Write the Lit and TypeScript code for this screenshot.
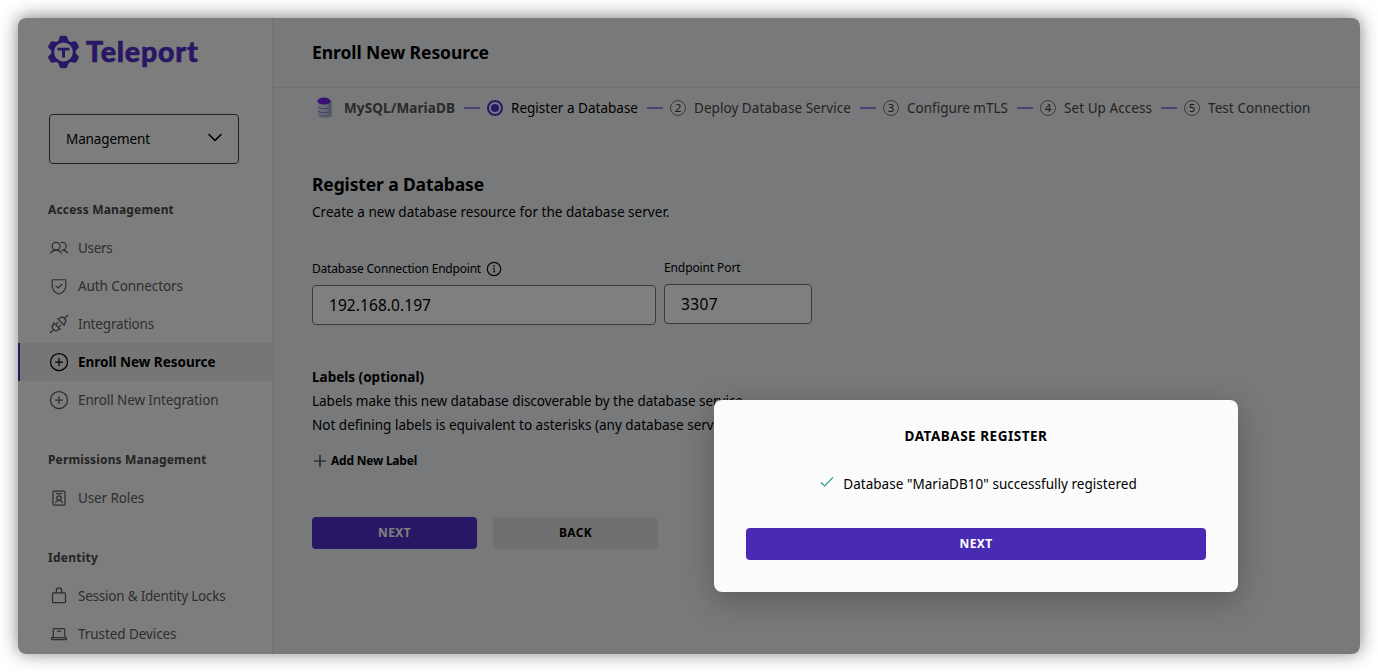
import { LitElement, html, svg, css } from "lit";
import { customElement, property } from "lit/decorators.js";

/** A single line of text tracked so that it fills a given width. */
@customElement("fit-text")
class FitText extends LitElement {
  @property({ type: Number }) w = 0;
  @property() text = "";
  static styles = css`
    :host { display: inline-block; white-space: pre; flex: none; }
  `;
  render() {
    return html`<span>${this.text}</span>`;
  }
  updated() {
    const span = this.renderRoot.querySelector("span") as HTMLElement;
    span.style.letterSpacing = "0";
    const natural = span.getBoundingClientRect().width;
    span.style.letterSpacing = `${(this.w - natural) / this.text.length}px`;
    this.style.width = `${this.w}px`;
  }
}

const t = (text: string, w: number) => html`<fit-text .text=${text} .w=${w}></fit-text>`;

const icons: Record<string, unknown> = {
  users: svg`<g transform="translate(.5 .2) scale(.075)" stroke-width="17"><circle cx="88" cy="108" r="52"/><path d="M155.4 57.9A54.5 54.5 0 0 1 169.5 56a52 52 0 0 1 0 104M16 197.4a88 88 0 0 1 144 0M169.5 160a87.9 87.9 0 0 1 72 37.4"/></g>`,
  shield: svg`<g transform="scale(.078125)" stroke-width="15"><path d="M40 114.7V56a8 8 0 0 1 8-8h160a8 8 0 0 1 8 8v58.7c0 84-71.3 111.8-85.5 116.5a7.2 7.2 0 0 1-5 0C111.3 226.5 40 198.7 40 114.7Z"/><path d="M166 106l-50 48-26-24"/></g>`,
  plugs: svg`<path d="M1.4 18.8l3.2-3.2M4.6 8.6l6.8 6.8M5.5 9.5L4.2 10.8a3.2 3.2 0 0 0 0 4.5l.5.5a3.2 3.2 0 0 0 4.5 0l1.3-1.3M6.8 10.6l2.2-2.2M9.5 13.3l2.2-2.2M8.6 4.6l6.8 6.8M9.5 5.5l1.3-1.3a3.2 3.2 0 0 1 4.5 0l.5.5a3.2 3.2 0 0 1 0 4.5l-1.3 1.3M15.5 4.5l3.2-3.2"/>`,
  plus: svg`<circle cx="10" cy="10" r="8.5"/><path d="M10 6.5v7M6.5 10h7"/>`,
  badge: svg`<rect x="4" y="3" width="12" height="14" rx="1"/><path d="M7.5 5.5h5M6.6 14.6c.6-1.5 1.9-2.3 3.4-2.3s2.8.8 3.4 2.3"/><circle cx="10" cy="10" r="2.2"/>`,
  lock: svg`<rect x="3.5" y="6.8" width="13" height="9.8" rx=".9"/><path d="M7.4 6.6V4.5a2.6 2.6 0 0 1 5.2 0V6.6"/>`,
  laptop: svg`<path d="M4.2 13.3V5.6a1 1 0 0 1 1-1h9.6a1 1 0 0 1 1 1v7.7M2.5 13.5h15v1.2a1 1 0 0 1-1 1h-13a1 1 0 0 1-1-1zM8.5 7h3"/>`,
};

const icon = (name: string) =>
  html`<svg class="icon" viewBox="0 0 20 20" width="20" height="20">${icons[name]}</svg>`;

type Item = { icon: string; label: string; w: number; active?: boolean };
const sections: { title: string; w: number; items: Item[] }[] = [
  {
    title: "Access Management", w: 126,
    items: [
      { icon: "users", label: "Users", w: 34.5 },
      { icon: "shield", label: "Auth Connectors", w: 105 },
      { icon: "plugs", label: "Integrations", w: 76 },
      { icon: "plus", label: "Enroll New Resource", w: 137.5, active: true },
      { icon: "plus", label: "Enroll New Integration", w: 140.5 },
    ],
  },
  { title: "Permissions Management", w: 158.5, items: [{ icon: "badge", label: "User Roles", w: 66 }] },
  {
    title: "Identity", w: 50,
    items: [
      { icon: "lock", label: "Session & Identity Locks", w: 147.5 },
      { icon: "laptop", label: "Trusted Devices", w: 98.5 },
    ],
  },
];

const steps = [
  { label: "Register a Database", w: 127 },
  { label: "Deploy Database Service", w: 157 },
  { label: "Configure mTLS", w: 101 },
  { label: "Set Up Access", w: 88 },
  { label: "Test Connection", w: 102.5 },
];

@customElement("app-root")
class AppRoot extends LitElement {
  static styles = css`
    * { box-sizing: border-box; }
    :host {
      display: block; width: 1378px; height: 672px; padding: 18px; overflow: hidden;
      background: #fff; font-family: "Noto Sans", sans-serif; color: #000; font-size: 13.5px;
      box-sizing: border-box; position: relative;
    }
    .window {
      position: relative; display: flex; width: 1342px; height: 636px; border-radius: 8px;
      box-shadow: 0 -1px 18px rgba(0, 0, 0, 0.5);
    }
    .page { display: flex; flex: 1; border-radius: 8px; overflow: hidden; background: #f1f2f4; }
    .scrim { position: absolute; inset: 0; border-radius: 8px; background: rgba(0, 0, 0, 0.5); }
    svg { display: block; flex: none; }
    .icon { fill: none; stroke: currentColor; stroke-width: 1.25; stroke-linecap: round; stroke-linejoin: round; }

    .side { width: 255px; background: #fbfbfc; border-right: 1px solid #e6e7ea; flex: none; }
    .logo { display: flex; align-items: center; gap: 6px; height: 68px; padding-left: 29px; color: #512fc9;
      font: 900 28.5px/66px Lato, sans-serif; }
    .word { height: 68px; -webkit-text-stroke: 0.6px #512fc9; }
    .picker { margin: 28px 0 0 31px; width: 190px; height: 50px; border: 1px solid #444; border-radius: 4px;
      padding: 0 15px 0 16px; display: flex; align-items: center; justify-content: space-between; color: #000; }
    .nav { padding-top: 26px; }
    .title { height: 39px; line-height: 39px; padding-left: 30px; font-weight: 700; font-size: 12px; color: #484848; }
    .item { height: 38px; display: flex; align-items: center; gap: 9px; padding-left: 31px; color: #5c5c5c; }
    .item.active { background: #ececed; color: #000; font-weight: 700; border-left: 2px solid #512fc9; padding-left: 29px; }
    .sect { margin-bottom: 21px; }

    .main { flex: 1; }
    .head { height: 70px; border-bottom: 1px solid #e2e3e6; padding: 0 0 2px 39px; display: flex; align-items: center;
      font-size: 17.5px; font-weight: 700; }
    .steps { height: 40px; display: flex; align-items: center; padding-left: 43px; }
    .db { font-weight: 700; color: #555; margin-left: 11px; display: flex; }
    .bar { width: 16px; height: 2px; background: #9b82e3; margin: 0 7px 0 9px; flex: none; }
    .num { width: 16px; height: 16px; border: 1px solid #777; border-radius: 50%; display: grid; place-items: center;
      font-size: 11.5px; line-height: 1; color: #333; flex: none; margin-right: 8px; }
    .num.on { border: 2px solid #512fc9; }
    .num.on i { width: 8px; height: 8px; border-radius: 50%; background: #512fc9; }
    .step { color: #484848; display: flex; align-items: center; }
    .step.on { color: #000; }
    .body { padding: 43px 0 0 39px; }
    .h2 { font-size: 17.5px; font-weight: 700; height: 26px; line-height: 26px; display: flex; margin-bottom: 3px; }
    .p { height: 24px; line-height: 24px; display: flex; }
    .fields { display: flex; gap: 8px; margin-top: 36px; }
    .label { height: 24px; padding-bottom: 9px; font-size: 12px; display: flex; align-items: center; gap: 5px; }
    .label svg { margin-top: 1px; }
    .input { height: 40px; border: 1px solid #777; border-radius: 4px; background: #fff; font-size: 15.5px;
      padding-left: 16px; display: flex; align-items: center; }
    .ep { width: 344px; padding-top: 1px; }
    .pt { width: 148px; }
    .labels { margin-top: 40px; }
    .add { display: flex; align-items: center; gap: 4px; height: 24px; margin-top: 12px; padding-left: 1px; font-weight: 700; font-size: 12px; }
    .add fit-text { margin-bottom: 1px; }
    .row { display: flex; gap: 16px; margin-top: 44px; }
    .btn { width: 165px; height: 32px; border-radius: 4px; display: flex; align-items: center; justify-content: center;
      font-size: 12px; font-weight: 700; background: #e0e0e1; padding-bottom: 1px; }
    .btn.primary { background: #512fc9; color: #fff; }

    .modal { position: absolute; left: 696px; top: 382px; width: 524px; height: 192px; border-radius: 8px;
      background: #fbfbfc; padding: 24px 32px 32px; display: flex; flex-direction: column; align-items: center;
      box-shadow: 0 8px 32px rgba(0, 0, 0, 0.26); }
    .mt { font-weight: 700; height: 24px; line-height: 24px; }
    .msg { height: 24px; line-height: 24px; display: flex; gap: 9px; margin-top: 24px; padding-left: 5px; }
    .msg svg { margin-top: 3px; }
    .modal .btn { width: 460px; margin-top: 32px; background: #482bb2; color: #fff; }
  `;

  renderSide() {
    return html`<div class="side">
      <div class="logo">
        <svg width="33" height="34" viewBox="-16.5 -17 33 34" fill="currentColor">
          <circle r="10.8" fill="none" stroke="currentColor" stroke-width="2.800" />
          ${[0, 60, 120, 180, 240, 300].map(
            (a) => svg`<path transform="rotate(${a})" d="M-5.200-10.400L-3.900-14.800Q-3.500-16.200-2.300-16.200H2.300Q3.500-16.200 3.900-14.800L5.200-10.400Z"/>`,
          )}
          <path d="M-6-4.200H6v2.600H1.500V5.600h-3V-1.600H-6z" />
        </svg>
        <div class="word">${t("Teleport", 112.5)}</div>
      </div>
      <div class="picker">
        ${t("Management", 84)}
        <svg width="16" height="16" viewBox="0 0 16 16" fill="none" stroke="currentColor" stroke-width="1.6"
          stroke-linecap="round" stroke-linejoin="round"><path d="M2 3.5l6 6 6-6" /></svg>
      </div>
      <div class="nav">
        ${sections.map(
          (s) => html`<div class="sect">
            <div class="title">${t(s.title, s.w)}</div>
            ${s.items.map((i) => html`<div class="item ${i.active ? "active" : ""}">${icon(i.icon)}${t(i.label, i.w)}</div>`)}
          </div>`,
        )}
      </div>
    </div>`;
  }

  renderMain() {
    return html`<div class="main">
      <div class="head">${t("Enroll New Resource", 177)}</div>
      <div class="steps">
        <svg width="17" height="22" viewBox="0 0 17 22">
          <defs><linearGradient id="g"><stop offset="0" stop-color="#dde2ec" /><stop offset=".6" stop-color="#c8d0de" /><stop offset="1" stop-color="#98a5bd" /></linearGradient></defs>
          <path d="M1.500 4v14.300c0 1.600 3.100 2.900 7 2.900s7-1.300 7-2.900V4z" fill="url(#g)" />
          <path d="M2 10.200c2 1.500 8 1.900 11.500.6M2 14.300c2 1.500 8 1.900 11.500.6M3 18c2 1.200 6 1.400 8.500.8" fill="none" stroke="#8a66e0" stroke-width=".9" />
          <ellipse cx="8" cy="4.100" rx="6.800" ry="3.500" fill="#7420ee" />
        </svg>
        <div class="db">${t("MySQL/MariaDB", 111)}</div>
        ${steps.map(
          (s, i) => html`<div class="bar"></div>
            <div class="step ${i === 0 ? "on" : ""}">
              <div class="num ${i === 0 ? "on" : ""}">${i === 0 ? html`<i></i>` : i + 1}</div>
              ${t(s.label, s.w)}
            </div>`,
        )}
      </div>
      <div class="body">
        <div class="h2">${t("Register a Database", 172)}</div>
        <div class="p">${t("Create a new database resource for the database server.", 357.5)}</div>
        <div class="fields">
          <div class="ep">
            <div class="label">
              ${t("Database Connection Endpoint", 169)}
              <svg width="16" height="16" viewBox="0 0 16 16" fill="none" stroke="#111" stroke-width="1.2">
                <circle cx="8" cy="8" r="6.700" /><path d="M6.800 7.300h1.300v3.500M7.200 10.900h2" stroke-width="1" /><circle cx="8" cy="5" r=".5" fill="#111" stroke-width=".6" />
              </svg>
            </div>
            <div class="input">${t("192.168.0.197", 102)}</div>
          </div>
          <div class="pt">
            <div class="label">${t("Endpoint Port", 76.5)}</div>
            <div class="input">${t("3307", 37)}</div>
          </div>
        </div>
        <div class="labels">
          <div class="p"><b>${t("Labels (optional)", 112)}</b></div>
          <div class="p">${t("Labels make this new database discoverable by the database service.", 434.5)}</div>
          <div class="p">${t("Not defining labels is equivalent to asterisks (any database service).", 427)}</div>
        </div>
        <div class="add">
          <svg width="14" height="14" viewBox="0 0 14 14" stroke="#222" stroke-width="1.2"><path d="M7 1v12M1 7h12" /></svg>
          ${t("Add New Label", 86)}
        </div>
        <div class="row">
          <div class="btn primary">${t("NEXT", 33)}</div>
          <div class="btn">${t("BACK", 33)}</div>
        </div>
      </div>
    </div>`;
  }

  render() {
    return html`<div class="window">
      <div class="page">${this.renderSide()}${this.renderMain()}</div>
      <div class="scrim"></div>
      <div class="modal">
        <div class="mt">${t("DATABASE REGISTER", 143)}</div>
        <div class="msg">
          <svg width="14" height="14" viewBox="0 0 14 14" fill="none" stroke="#2a9d88" stroke-width="1.2"><path d="M1 7.500L4.700 11 13 2.300" /></svg>
          ${t('Database "MariaDB10" successfully registered', 293.5)}
        </div>
        <div class="btn">${t("NEXT", 33)}</div>
      </div>
    </div>`;
  }
}
